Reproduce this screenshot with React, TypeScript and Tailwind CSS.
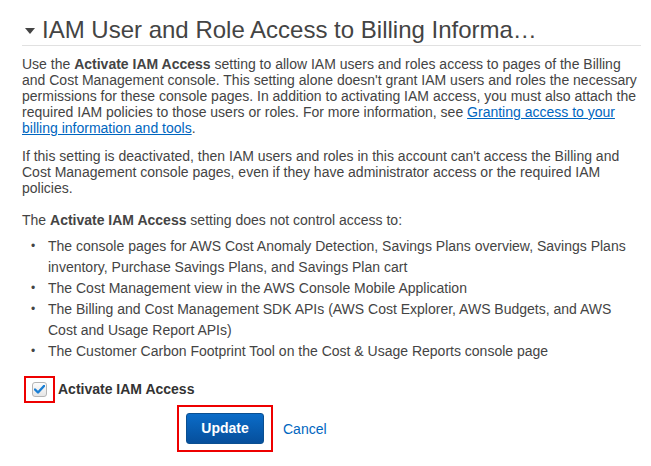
import React, { useState } from "react";

const App = () => {
  const [checked, setChecked] = useState(true);

  return (
    <div className="w-[651px] h-[466px] bg-white text-[#444] font-['Liberation_Sans',Arial,sans-serif] overflow-hidden">
      <div className="pl-[18px] pr-[10px] pt-[16px]">
        {/* Header */}
        <div className="flex items-center ml-[4px] border-b border-[#e1e1e1] pb-[1px]">
          <svg width="10" height="6" viewBox="0 0 10 6" className="ml-[3px] mr-[7px] mt-[2px]">
            <path d="M0 0 L10 0 L5 6 Z" fill="#444" />
          </svg>
          <h2 className="text-[24px] leading-[28px] text-[#444] font-normal">
            IAM User and Role Access to Billing Informa…
          </h2>
        </div>

        <div className="pl-[4px] pr-0 pt-[10px] text-[14px] leading-[16px]">
          <p>
            Use the <b>Activate IAM Access</b> setting to allow IAM users and roles access to pages of the Billing
            and Cost Management console. This setting alone doesn't grant IAM users and roles the necessary
            permissions for these console pages. In addition to activating IAM access, you must also attach the
            required IAM policies to those users or roles. For more information, see{" "}
            <a href="#" className="text-[#0066c0] underline">
              Granting access to your billing information and tools
            </a>
            .
          </p>

          <p className="mt-[12px]">
            If this setting is deactivated, then IAM users and roles in this account can't access the Billing and
            Cost Management console pages, even if they have administrator access or the required IAM
            policies.
          </p>

          <p className="mt-[16px]">
            The <b>Activate IAM Access</b> setting does not control access to:
          </p>

          <ul className="mt-[8px] leading-[21px]">
            {[
              "The console pages for AWS Cost Anomaly Detection, Savings Plans overview, Savings Plans inventory, Purchase Savings Plans, and Savings Plan cart",
              "The Cost Management view in the AWS Console Mobile Application",
              "The Billing and Cost Management SDK APIs (AWS Cost Explorer, AWS Budgets, and AWS Cost and Usage Report APIs)",
              "The Customer Carbon Footprint Tool on the Cost & Usage Reports console page",
            ].map((item) => (
              <li key={item} className="flex">
                <span className="w-[26px] shrink-0 pl-[9px] text-[12px]">•</span>
                <span className="pr-[14px]">{item}</span>
              </li>
            ))}
          </ul>
        </div>

        {/* Checkbox */}
        <div className="flex items-center mt-[14px] ml-[6px]">
          <div className="border-2 border-[#e00] px-[6px] py-[4px]">
            <button
              onClick={() => setChecked(!checked)}
              className="w-[15px] h-[15px] rounded-[3px] border border-[#b5b5b5] bg-gradient-to-b from-[#fcfcfc] to-[#e6e6e6] flex items-center justify-center"
            >
              {checked && (
                <svg width="11" height="9" viewBox="0 0 11 9">
                  <path d="M1 4.5 L4 7.5 L10 1" stroke="#1a7fd4" strokeWidth="2.4" fill="none" strokeLinecap="round" strokeLinejoin="round" />
                </svg>
              )}
            </button>
          </div>
          <span className="ml-[3px] font-bold text-[14px] text-[#333]">Activate IAM Access</span>
        </div>

        {/* Buttons */}
        <div className="flex items-center ml-[159px] mt-[2px]">
          <div className="border-2 border-[#e00] px-[7px] py-[6px]">
            <button className="w-[78px] h-[31px] rounded-[3px] bg-gradient-to-b from-[#0b6cc8] to-[#064f9c] border border-[#0a4f91] text-white font-bold text-[14px]">
              Update
            </button>
          </div>
          <a href="#" className="ml-[10px] mt-[2px] text-[#0066c0] text-[14px]">
            Cancel
          </a>
        </div>
      </div>
    </div>
  );
};

export default App;
